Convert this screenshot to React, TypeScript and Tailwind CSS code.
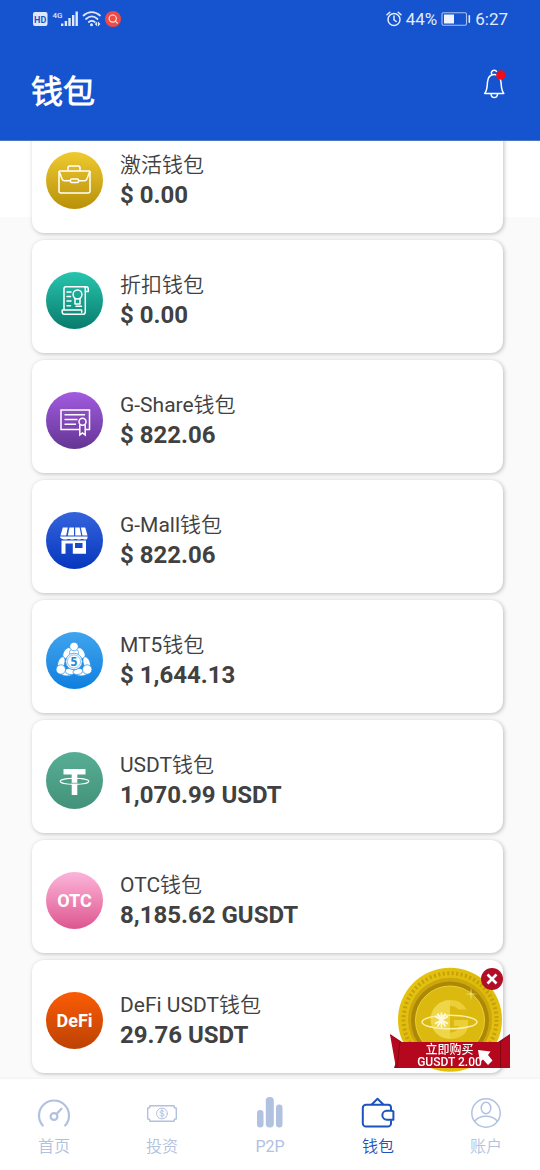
import { useState } from 'react';
import type { ReactNode } from 'react';
import { clsx } from 'clsx';

interface Wallet {
  name: string;
  amount: string;
  badge: string;
  icon: ReactNode;
}

interface Tab {
  label: string;
  icon: ReactNode;
}

const BriefcaseIcon = () => (
  <svg viewBox="0 0 57 57" className="size-full" fill="none" stroke="#fff" strokeWidth="1.5" strokeLinejoin="round" aria-hidden="true">
    <path d="M22 18.5v-2.600a1.800 1.800 0 0 1 1.800-1.800h8.400a1.800 1.800 0 0 1 1.800 1.800v2.600" />
    <path d="M13 19h31M13 19l3.200 8.200a2.500 2.500 0 0 0 2.300 1.600h6M44 19l-3.200 8.200a2.500 2.500 0 0 1-2.300 1.600h-6" />
    <path d="M13 19v20a2 2 0 0 0 2 2h27a2 2 0 0 0 2-2V19" />
    <rect x="24.5" y="27" width="8" height="3.600" rx="1" />
  </svg>
);

const ScrollIcon = () => (
  <svg viewBox="0 0 57 57" className="size-full" fill="none" stroke="#fff" strokeWidth="1.500" strokeLinejoin="round" strokeLinecap="round" aria-hidden="true">
    <path d="M18 37.500V16.500a1.800 1.800 0 0 1 1.800-1.800H40a2.300 2.300 0 0 1 2.300 2.300v2.500H39.500" />
    <path d="M38.500 14.700c1.200 1 .8 3 .8 4.800v20.200a2.600 2.600 0 0 1-2.600 2.600H18.500a2.300 2.300 0 0 1-2.300-2.300v-2h19.500v2.200" />
    <path d="M21 20h4M21 24.500h3.500M21 29h4M21 33.800h3.500M30 34.300h5.500" />
    <circle cx="31.500" cy="22.500" r="4.400" />
    <path d="M29 26.500v5.500h5v-5.500" />
  </svg>
);

const CertificateIcon = () => (
  <svg viewBox="0 0 57 57" className="size-full" fill="none" stroke="#fff" strokeWidth="1.500" aria-hidden="true">
    <path d="M33.500 37.500H15V18h28.500v19.500H40" />
    <path d="M18.500 22.800H39M18.500 27.500h13M18.500 32.300h11.500" />
    <circle cx="36.500" cy="29.800" r="3.500" />
    <path d="M33.800 32.500v10.500l2.700-2 2.700 2V32.500" />
  </svg>
);

const ShopIcon = () => (
  <svg viewBox="0 0 57 57" className="size-full" fill="#fff" aria-hidden="true">
    <path d="M16.800 15.500h5l-1.600 8h-5.700zM23.400 15.500h4.600v8h-6.200zM29.200 15.500h4.400l1.600 8h-6zM34.900 15.500h4.300l2.300 8h-5.100z" />
    <path d="M14 24.500h27.500v1.200a2 2 0 0 1-2 1.900c-1.500 0-2.200-.7-3.300-.7s-2 .7-3.400.7-2.200-.7-3.300-.7-2 .7-3.400.7-2.200-.7-3.300-.7-2 .7-3.400.7-5.400-.7-5.400-3.100z" />
    <path fillRule="evenodd" d="M15.500 28.500H40v13.200H26.800V31.500h-7.300v10.200h-4zM29 31V36h7.500v-5z" />
  </svg>
);

const Mt5Icon = () => (
  <svg viewBox="0 0 57 57" className="size-full" fill="#fff" stroke="#2591e6" strokeWidth=".7" aria-hidden="true">
    <ellipse cx="21.200" cy="21" rx="3.600" ry="6" transform="rotate(32 21.200 21)" />
    <ellipse cx="34.800" cy="21" rx="3.600" ry="6" transform="rotate(-32 34.800 21)" />
    <ellipse cx="15.300" cy="31" rx="3.400" ry="6.500" transform="rotate(18 15.300 31)" />
    <ellipse cx="40.700" cy="31" rx="3.400" ry="6.500" transform="rotate(-18 40.700 31)" />
    <ellipse cx="21" cy="40.700" rx="6.500" ry="3.200" />
    <ellipse cx="35" cy="40.700" rx="6.500" ry="3.200" />
    <ellipse cx="24" cy="39.500" rx="5" ry="3" transform="rotate(12 24 39.500)" />
    <ellipse cx="32" cy="39.500" rx="5" ry="3" transform="rotate(-12 32 39.500)" />
    <ellipse cx="28" cy="20.500" rx="4.500" ry="4" />
    <circle cx="28" cy="14.500" r="4.300" />
    <circle cx="14.800" cy="37.500" r="4.700" />
    <circle cx="41.200" cy="37.500" r="4.700" />
    <circle cx="28" cy="29.500" r="8.300" />
    <circle cx="28" cy="29.500" r="6.600" strokeWidth=".5" />
    <text x="28" y="33.800" textAnchor="middle" fontSize="12" fontWeight="700" fill="#2487d8" stroke="none" fontFamily="Noto Sans, sans-serif">5</text>
  </svg>
);

const TetherIcon = () => (
  <svg viewBox="0 0 57 57" className="size-full" aria-hidden="true">
    <path fill="#fff" d="M17.500 17h22v5.500h-8.200V43h-5.600V22.500h-8.200z" />
    <ellipse cx="28.500" cy="29.300" rx="14.300" ry="3" fill="none" stroke="#fff" strokeWidth="1.100" />
    <path d="M25.700 31.200c2 .15 3.600.15 5.600 0" fill="none" stroke="#4fa48a" strokeWidth=".8" />
  </svg>
);

const GaugeIcon = () => (
  <svg viewBox="0 0 34 34" className="size-[34px]" fill="none" stroke="currentColor" strokeWidth="2.200" strokeLinecap="round" aria-hidden="true">
    <path d="M5.800 29.500A15 15 0 1 1 28.200 29.500" />
    <circle cx="17" cy="20.500" r="3.400" />
    <path d="M19.500 18l5-5.300" />
  </svg>
);

const BanknoteIcon = () => (
  <svg viewBox="0 0 34 34" className="size-[34px]" fill="none" stroke="currentColor" strokeWidth="1.400" strokeLinecap="round" aria-hidden="true">
    <path d="M5 9.700h24c0 1.600 1 2.500 2.300 2.500v10.600c-1.300 0-2.300.9-2.300 2.500H5c0-1.600-1-2.500-2.300-2.500V12.200C4 12.200 5 11.300 5 9.700z" />
    <circle cx="17" cy="17.500" r="5.400" strokeWidth="1" />
    <path strokeWidth="1" d="M19 15.800c-.3-.8-1-1.100-2-1.100-1.200 0-2 .5-2 1.400 0 2 4 .8 4 2.800 0 .9-.8 1.400-2 1.400-1 0-1.800-.4-2-1.200M17 13.600v7.800" />
  </svg>
);

const BarsIcon = () => (
  <svg viewBox="0 0 34 34" className="size-[34px]" fill="currentColor" aria-hidden="true">
    <rect x="4" y="14" width="6.500" height="17.500" rx="3.200" />
    <rect x="12.800" y="1" width="8" height="30.500" rx="3.700" />
    <rect x="23" y="8.500" width="6.500" height="23" rx="3.200" />
  </svg>
);

const WalletIcon = () => (
  <svg viewBox="0 0 34 34" className="size-[34px]" fill="none" stroke="currentColor" strokeWidth="2" strokeLinejoin="round" aria-hidden="true">
    <path d="M30 14.800V11.500a2.800 2.800 0 0 0-2.800-2.800H5a3.200 3.200 0 0 0-3.200 3.200v15.500A3.200 3.200 0 0 0 5 30.600h21.800a3.200 3.200 0 0 0 3.200-3.200v-3.200" />
    <path d="M32.400 15.500v8.200h-6.600a4.100 4.100 0 0 1 0-8.900h5.200z" />
    <path d="M10.500 8.700L16.500 2.800l6 5.900" />
  </svg>
);

const UserIcon = () => (
  <svg viewBox="0 0 34 34" className="size-[34px]" fill="none" stroke="currentColor" strokeWidth="1.500" aria-hidden="true">
    <circle cx="17" cy="17" r="14.200" />
    <ellipse cx="17" cy="12" rx="4.800" ry="5.800" />
    <path d="M5.500 25.500C8 22 12 20.300 17 20.300s9 1.700 11.500 5.200" />
  </svg>
);

const wallets: Wallet[] = [
  { name: '激活钱包', amount: '$ 0.00', badge: 'from-[#efca2e] to-[#b89106]', icon: <BriefcaseIcon /> },
  { name: '折扣钱包', amount: '$ 0.00', badge: 'from-[#27c5ae] to-[#087c6d]', icon: <ScrollIcon /> },
  { name: 'G-Share钱包', amount: '$ 822.06', badge: 'from-[#a35be0] to-[#643694]', icon: <CertificateIcon /> },
  { name: 'G-Mall钱包', amount: '$ 822.06', badge: 'from-[#3463dc] to-[#0536be]', icon: <ShopIcon /> },
  { name: 'MT5钱包', amount: '$ 1,644.13', badge: 'from-[#3fa4ed] to-[#0b7fdf]', icon: <Mt5Icon /> },
  { name: 'USDT钱包', amount: '1,070.99 USDT', badge: 'from-[#57ae94] to-[#43927a]', icon: <TetherIcon /> },
  { name: 'OTC钱包', amount: '8,185.62 GUSDT', badge: 'from-[#fbb4da] to-[#dc5590]', icon: 'OTC' },
  { name: 'DeFi USDT钱包', amount: '29.76 USDT', badge: 'from-[#fb5c05] to-[#bd4204]', icon: 'DeFi' },
];

const tabs: Tab[] = [
  { label: '首页', icon: <GaugeIcon /> },
  { label: '投资', icon: <BanknoteIcon /> },
  { label: 'P2P', icon: <BarsIcon /> },
  { label: '钱包', icon: <WalletIcon /> },
  { label: '账户', icon: <UserIcon /> },
];

function StatusBar() {
  return (
    <div className="flex h-[38px] items-center justify-between px-8 text-[17px] leading-5 text-[#e3ebfb]">
      <svg viewBox="0 0 90 18" className="h-[18px] w-[90px]" aria-hidden="true">
        <rect x="1" y="2" width="14.500" height="14" rx="2" fill="#dfe8fa" />
        <text x="8.200" y="12.600" textAnchor="middle" fontSize="9" fontWeight="700" fill="#1654cf" fontFamily="Roboto, sans-serif">HD</text>
        <text x="20.500" y="8" fontSize="8" fontWeight="500" fill="#dfe8fa" fontFamily="Roboto, sans-serif">4G</text>
        <g fill="#dfe8fa">
          <rect x="29" y="13.500" width="2.400" height="2.500" />
          <rect x="32.700" y="11" width="2.400" height="5" />
          <rect x="36.300" y="8" width="2.400" height="8" />
          <rect x="40" y="5" width="2.400" height="11" />
          <rect x="43.500" y="1.500" width="2.400" height="14.500" />
        </g>
        <g fill="none" stroke="#dfe8fa" strokeWidth="1.700" strokeLinecap="round">
          <path d="M51.500 5.500c5-4.500 11.500-4.500 16.500 0" />
          <path d="M54 9c3.600-3.100 8-3.100 11.500 0" />
          <path d="M56.800 12c2-1.600 4-1.600 6 0" />
        </g>
        <circle cx="59.500" cy="14.700" r="1.500" fill="#dfe8fa" />
        <path fill="#dfe8fa" d="M65.200 11.500v5l-2.400-2.500zM66 11.500v5l2.400-2.500z" />
        <circle cx="81" cy="9" r="8" fill="#ee4b46" />
        <circle cx="80.700" cy="8.600" r="3.600" fill="none" stroke="#ffe3df" strokeWidth="1.200" />
        <path d="M83.300 11.200l2 2" stroke="#ffe3df" strokeWidth="1.200" strokeLinecap="round" />
      </svg>
      <div className="flex items-center gap-1">
        <svg viewBox="0 0 16 16" className="size-4" fill="none" stroke="currentColor" strokeWidth="1.500" strokeLinecap="round" aria-hidden="true">
          <circle cx="8" cy="8.500" r="6" />
          <path d="M8 5v3.800l2.200 1.700M1 3.800l2.800-2.500M15 3.800l-2.800-2.500" />
        </svg>
        <span>44%</span>
        <svg viewBox="0 0 30 14" className="h-[14px] w-[30px]" aria-hidden="true">
          <rect x="1" y=".8" width="24.500" height="12.400" rx="1.500" fill="none" stroke="#a9c1f0" strokeWidth="1.100" />
          <rect x="3" y="2.500" width="10" height="9" fill="#eef3fd" />
          <rect x="27.500" y="3" width="1.600" height="8" rx=".8" fill="#dfe8fa" />
        </svg>
        <span>6:27</span>
      </div>
    </div>
  );
}

function Header() {
  return (
    <header className="sticky top-0 z-10 h-[141px] border-b border-[#4b78c4] bg-[#1654cf] text-white">
      <StatusBar />
      <div className="flex items-center justify-between pl-[31px] pr-[33px] pt-[30px]">
        <h1 className="text-[32px] font-bold leading-[48px]">钱包</h1>
        <button type="button" aria-label="通知" className="-mt-4">
          <svg viewBox="0 0 26 30" className="h-[30px] w-[26px]" fill="none" stroke="#fff" strokeWidth="1.500" strokeLinejoin="round" aria-hidden="true">
            <path d="M11 5.500a2.900 2.900 0 0 1-.6-2.200 2.900 2.900 0 0 1 5.400-.3" />
            <path d="M3.700 24.500c2.700-3.500 2.300-6.500 2.800-11.500.4-4.500 2.900-7.500 6.800-7.500s6.300 3 6.700 7.500c.5 5 .1 8 2.800 11.500z" />
            <path d="M10 25c.2 2 1.500 3.500 3.300 3.500s3.100-1.500 3.300-3.500" />
            <circle cx="19.800" cy="6" r="4.700" fill="#ee0d18" stroke="none" />
          </svg>
        </button>
      </div>
    </header>
  );
}

function WalletCard({ wallet }: { wallet: Wallet }) {
  return (
    <li className="flex h-[113px] items-center gap-[17px] rounded-xl bg-white px-[14px] pt-[7px] shadow-[1px_1px_4px_rgba(0,0,0,0.25)]">
      <div
        className={clsx(
          'flex size-[57px] shrink-0 items-center justify-center rounded-full bg-linear-to-b text-[18px] font-bold text-white',
          wallet.badge,
        )}
      >
        {wallet.icon}
      </div>
      <div className="min-w-0 text-[#414141]">
        <p className="text-[21px] leading-[30px]">{wallet.name}</p>
        <p className="text-[24px] font-bold leading-[30px]">{wallet.amount}</p>
      </div>
    </li>
  );
}

function Promo({ onClose }: { onClose: () => void }) {
  return (
    <div className="fixed bottom-[97px] right-[30px] z-20 h-[108px] w-[120px]">
      <button type="button" aria-label="立即购买 GUSDT" className="block size-full">
        <svg viewBox="0 0 120 108" className="size-full">
          <defs>
            <linearGradient id="coin" x1="0" y1="0" x2="1" y2="1">
              <stop offset="0" stopColor="#e8c614" />
              <stop offset=".5" stopColor="#ddb908" />
              <stop offset="1" stopColor="#e6c418" />
            </linearGradient>
          </defs>
          <circle cx="60" cy="54.700" r="52" fill="url(#coin)" />
          <circle cx="60" cy="54.700" r="46.500" fill="none" stroke="#c5a00c" strokeWidth="4" strokeDasharray="2 2.500" />
          <circle cx="60" cy="54.700" r="42" fill="#cba60c" />
          <circle cx="60" cy="55.500" r="39" fill="#ac8804" />
          <circle cx="60" cy="55.500" r="34.500" fill="#dbb90f" stroke="#ecd03c" strokeWidth="1" />
          <path d="M60 35a19.500 19.500 0 0 0 0 39z" fill="#efd548" />
          <path d="M60 35c7.500 0 13 3 16.500 9.500H68.500c-2-2.500-4.500-3.500-8.500-3.500z" fill="#ecce38" />
          <path d="M64 55h14v6c-1 8-8 13-18 13v-6.500c4.500 0 8-2 9-6.500h-5z" fill="#ecce38" />
          <ellipse cx="59.500" cy="57" rx="27.500" ry="6.800" fill="none" stroke="#fbf0a8" strokeWidth="1.500" />
          <path d="M51.500 47.500v15M45 51.300l13 7.500M45 58.800l13-7.500M47.500 48.500l8 13M55.500 48.500l-8 13" stroke="#fff9df" strokeWidth="1.800" />
          <path d="M81 22l.8 6.200L88 29l-6.200.8L81 36l-.8-6.200L74 29l6.200-.8z" fill="#f3e080" opacity=".8" />
          <path d="M0 69l12 8v26H4l4-12z" fill="#8b0716" />
          <path d="M120 69l-12 8v26h12l-4-12z" fill="#8b0716" />
          <path d="M0 69.500L10 77h100.500L120 69.500V103H6z" fill="#b5071d" />
          <path d="M10 77L7 103M110.500 77v26" stroke="#83040f" strokeWidth="1" />
          <text x="59.500" y="89" textAnchor="middle" fontSize="12" fontWeight="500" fill="#fff" fontFamily="Noto Sans CJK SC, sans-serif">立即购买</text>
          <text x="59.500" y="101" textAnchor="middle" fontSize="12" fontWeight="500" fill="#fff" fontFamily="Roboto, sans-serif">GUSDT 2.00</text>
          <path d="M88 85l12.500 1.500-2.500 3.500 4.500 5.500-4.500 4.500-5-5.500-3 2.500z" fill="#fff" />
        </svg>
      </button>
      <button
        type="button"
        aria-label="关闭"
        onClick={onClose}
        className="absolute right-[7px] top-[3px] flex size-[22px] items-center justify-center rounded-full bg-[#b00f27]"
      >
        <svg viewBox="0 0 12 12" className="size-3" stroke="#fff" strokeWidth="2.600" aria-hidden="true">
          <path d="M1.500 1.500l9 9M10.500 1.500l-9 9" />
        </svg>
      </button>
    </div>
  );
}

export default function App() {
  const [active, setActive] = useState('钱包');
  const [promoOpen, setPromoOpen] = useState(true);

  return (
    <div className="flex min-h-screen flex-col bg-[#fafafa] font-['Roboto','Noto_Sans_CJK_SC_DemiLight','Noto_Sans_CJK_SC_Light','Noto_Sans_CJK_SC',sans-serif]">
      <Header />
      <main className="-mt-[21px] flex-1 bg-[linear-gradient(#fff_97px,#fafafa_97px)] pb-[6px] pl-8 pr-[37px]">
        <ul className="flex flex-col gap-[7px]">
          {wallets.map((wallet) => (
            <WalletCard key={wallet.name} wallet={wallet} />
          ))}
        </ul>
      </main>
      {promoOpen && <Promo onClose={() => setPromoOpen(false)} />}
      <nav className="sticky bottom-0 z-10 grid h-[91px] grid-cols-5 bg-white shadow-[0_-1px_2px_rgba(0,0,0,0.04)]">
        {tabs.map((tab) => (
          <button
            key={tab.label}
            type="button"
            onClick={() => setActive(tab.label)}
            className={clsx(
              'flex flex-col items-center gap-[5px] pt-[17px] text-[16px] leading-6',
              active === tab.label ? 'text-[#1d53bd]' : 'text-[#b1c1e0]',
            )}
          >
            {tab.icon}
            {tab.label}
          </button>
        ))}
      </nav>
    </div>
  );
}
